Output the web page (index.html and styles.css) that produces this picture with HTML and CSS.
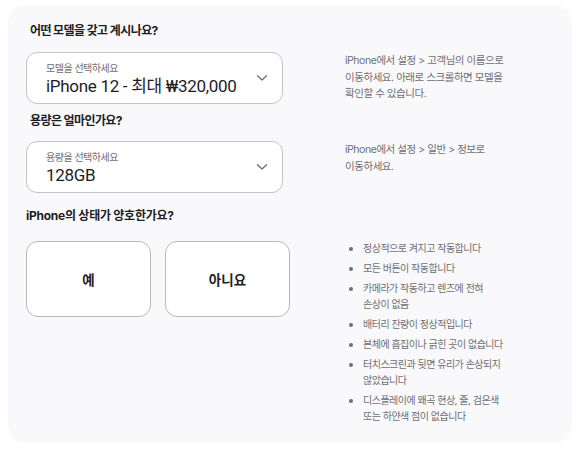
FILE: index.html
```html
<!DOCTYPE html>
<html lang="ko">
<head>
<meta charset="utf-8">
<link rel="stylesheet" href="styles.css">
</head>
<body>
<div class="card">
  <section class="block">
    <h2 class="q q-inset">어떤 모델을 갖고 계시나요?</h2>
    <div class="row">
      <div class="select">
        <div class="sel-label">모델을 선택하세요</div>
        <div class="sel-value">iPhone 12 - 최대 ₩320,000</div>
        <svg class="chev" width="12" height="8" viewBox="0 0 12 8"><path d="M1.5 1.8 L6 6 L10.5 1.8" fill="none" stroke="#6e6e73" stroke-width="1.3" stroke-linecap="round" stroke-linejoin="round"/></svg>
      </div>
      <p class="help">iPhone에서 설정 &gt; 고객님의 이름으로<br>이동하세요. 아래로 스크롤하면 모델을<br>확인할 수 있습니다.</p>
    </div>
  </section>
  <section class="block b2">
    <h2 class="q q-inset">용량은 얼마인가요?</h2>
    <div class="row">
      <div class="select">
        <div class="sel-label">용량을 선택하세요</div>
        <div class="sel-value">128GB</div>
        <svg class="chev" width="12" height="8" viewBox="0 0 12 8"><path d="M1.5 1.8 L6 6 L10.5 1.8" fill="none" stroke="#6e6e73" stroke-width="1.3" stroke-linecap="round" stroke-linejoin="round"/></svg>
      </div>
      <p class="help">iPhone에서 설정 &gt; 일반 &gt; 정보로<br>이동하세요.</p>
    </div>
  </section>
  <section class="block b3">
    <h2 class="q q3">iPhone의 상태가 양호한가요?</h2>
    <div class="row">
      <div class="choices">
        <button class="choice">예</button>
        <button class="choice">아니요</button>
      </div>
      <ul class="checks">
        <li>정상적으로 켜지고 작동합니다</li>
        <li>모든 버튼이 작동합니다</li>
        <li>카메라가 작동하고 렌즈에 전혀<br>손상이 없음</li>
        <li>배터리 잔량이 정상적입니다</li>
        <li>본체에 흠집이나 긁힌 곳이 없습니다</li>
        <li>터치스크린과 뒷면 유리가 손상되지<br>않았습니다</li>
        <li>디스플레이에 왜곡 현상, 줄, 검은색<br>또는 하얀색 점이 없습니다</li>
      </ul>
    </div>
  </section>
</div>
</body>
</html>
```

FILE: styles.css
```css
* { box-sizing: border-box; }
html, body { margin: 0; padding: 0; background: #fff; }
body {
  font-family: "Inter", "Noto Sans CJK KR", sans-serif;
  color: #1d1d1f;
  padding: 5px 8px 7px;
}
.card {
  background: #f9f9fb;
  border-radius: 18px;
  height: 438px;
  padding: 18px 0 0 18px;
}
.q {
  margin: 0;
  font-size: 12px;
  line-height: 16px;
  font-weight: 700;
  letter-spacing: -0.6px;
  color: #1d1d1f;
}
.q-inset { padding-left: 4px; }
.q3 { letter-spacing: -0.25px; }
.row {
  display: flex;
  align-items: flex-start;
}
.block .row { margin-top: 13px; }
.b2 { margin-top: 9px; }
.b2 .row { margin-top: 12px; }
.b3 { margin-top: 15px; }
.b3 .row { margin-top: 17px; }
.select {
  position: relative;
  width: 257px;
  height: 52px;
  background: #fff;
  border: 1px solid #c4c4c8;
  border-radius: 11px;
  padding: 8px 19px 0;
}
.sel-label {
  font-size: 10px;
  line-height: 14px;
  letter-spacing: -0.5px;
  color: #6e6e73;
}
.sel-value {
  font-family: "Roboto", "Noto Sans CJK KR", sans-serif;
  font-size: 17px;
  line-height: 22px;
  letter-spacing: -0.3px;
  color: #1d1d1f;
}
.chev {
  position: absolute;
  right: 14px;
  top: 21px;
}
.help {
  margin: 1px 0 0 62px;
  width: 180px;
  font-size: 10.5px;
  line-height: 16.5px;
  letter-spacing: -0.45px;
  color: #6e6e73;
}
.choices {
  display: flex;
  gap: 14px;
}
.choice {
  width: 125px;
  height: 76px;
  background: #fff;
  border: 1px solid #b8b8bc;
  border-radius: 12px;
  font-family: inherit;
  font-size: 13.5px;
  font-weight: 700;
  color: #1d1d1f;
  padding: 0;
}
.checks {
  margin: -1px 0 0 57px;
  padding: 0 0 0 16px;
  width: 180px;
  font-size: 10px;
  line-height: 16px;
  letter-spacing: -0.5px;
  color: #6e6e73;
}
.checks li { margin-bottom: 4px; }
.checks li::marker { font-size: 11px; color: #6e6e73; }
```
